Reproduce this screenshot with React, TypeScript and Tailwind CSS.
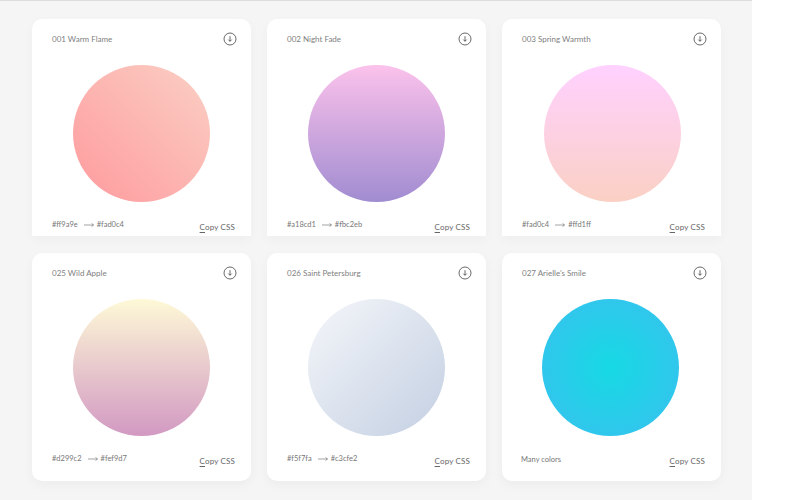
const cards = [
  { title: "001 Warm Flame", from: "#ff9a9e", to: "#fad0c4", circle: "ml-[21px] bg-[linear-gradient(45deg,#ff9a9e_0%,#fad0c4_100%)]" },
  { title: "002 Night Fade", from: "#a18cd1", to: "#fbc2eb", circle: "ml-[21px] bg-[linear-gradient(to_top,#a18cd1_0%,#fbc2eb_100%)]" },
  { title: "003 Spring Warmth", from: "#fad0c4", to: "#ffd1ff", circle: "ml-[22px] bg-[linear-gradient(to_top,#fad0c4_0%,#ffd1ff_100%)]" },
  { title: "025 Wild Apple", from: "#d299c2", to: "#fef9d7", circle: "ml-[21px] bg-[linear-gradient(to_top,#d299c2_0%,#fef9d7_100%)]" },
  { title: "026 Saint Petersburg", from: "#f5f7fa", to: "#c3cfe2", circle: "ml-[21px] bg-[linear-gradient(135deg,#f5f7fa_0%,#c3cfe2_100%)]" },
  { title: "027 Arielle's Smile", circle: "ml-[20px] bg-[radial-gradient(circle_145px_at_center,#16d9e3_0%,#30c7ec_47%,#46aef7_100%)]" },
];

function DownloadIcon() {
  return (
    <svg width="14" height="14" viewBox="0 0 14 14" fill="none" stroke="#444" strokeWidth="0.8" className="block">
      <circle cx="7" cy="7" r="6" />
      <path d="M7 4.2v5M5.3 7.6 7 9.3l1.7-1.7" />
    </svg>
  );
}

function Card({ card, clipped }: { card: (typeof cards)[number]; clipped: boolean }) {
  return (
    <div
      className={
        clipped
          ? "h-[217px] overflow-hidden rounded-t-[10px] bg-white pl-5 pr-[14px] pt-[13px] shadow-[0_4px_12px_rgba(0,0,0,0.03)]"
          : "h-[228px] overflow-hidden rounded-[10px] bg-white pl-5 pr-[14px] pt-[13px] shadow-[0_4px_12px_rgba(0,0,0,0.04)]"
      }
    >
      <div className="flex h-[14px] items-center justify-between">
        <span className="text-[8px] text-[#808080]">{card.title}</span>
        <DownloadIcon />
      </div>
      <div className="mt-[19px] flex">
        <div className={`h-[137px] w-[137px] rounded-full ${card.circle}`} />
      </div>
      <div className="mt-[16px] flex items-start justify-between">
        {card.from ? (
          <div className="flex h-[14px] items-center text-[7.5px] text-[#777]">
            <span>{card.from}</span>
            <svg width="10" height="6" viewBox="0 0 10 6" fill="none" stroke="#666" strokeWidth="0.6" className="ml-[6px] mr-[3px]">
              <path d="M0 3h9.5M7.5 1.4 9.5 3 7.5 4.6" />
            </svg>
            <span>{card.to}</span>
          </div>
        ) : (
          <div className="-ml-[1px] mt-[1px] flex h-[14px] items-center text-[7.5px] text-[#777]">Many colors</div>
        )}
        <div className="mr-[2px] mt-[2px] text-[8px] leading-[14px] tracking-[0.15px] text-[#666]">
          <span className="underline underline-offset-2">C</span>opy CSS
        </div>
      </div>
    </div>
  );
}

export default function App() {
  return (
    <div className="h-[500px] w-[800px] overflow-hidden bg-white font-['Lato','Noto_Sans',sans-serif]">
      <div className="h-[500px] w-[752px] border-t border-[#dcdcdc] bg-[#f5f5f5] pl-8 pt-[18px]">
        <div className="grid w-[689px] grid-cols-[219px_219px_219px] gap-x-4 gap-y-[17px]">
          {cards.map((c, i) => (
            <Card key={c.title} card={c} clipped={i < 3} />
          ))}
        </div>
      </div>
    </div>
  );
}
